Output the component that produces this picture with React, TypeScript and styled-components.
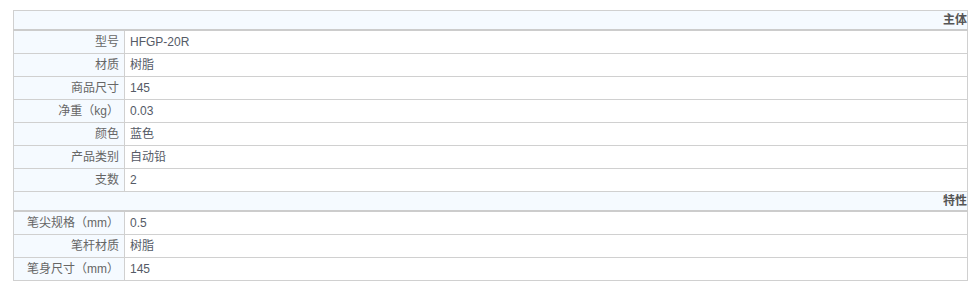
import React from "react";
import styled, { createGlobalStyle } from "styled-components";

const GlobalStyle = createGlobalStyle`
  body {
    margin: 0;
    background: #ffffff;
    font-family: "Liberation Sans", Arial, "Noto Sans CJK SC", sans-serif;
  }
`;

const Wrapper = styled.div`
  padding: 10px 0 0 13px;
`;

const SpecTable = styled.table`
  width: 955px;
  border-collapse: collapse;
  table-layout: fixed;
  font-size: 12px;
  color: #666666;
`;

const SectionHead = styled.th`
  height: 18px;
  padding: 0;
  text-align: right;
  font-weight: bold;
  font-size: 12px;
  line-height: 18px;
  color: #555555;
  background: #f5faff;
  border: 1px solid #d0d0d0;
  border-bottom: 2px solid #cccccc;
`;

const Label = styled.td`
  width: 105px;
  height: 22px;
  padding: 0 5px 0 0;
  text-align: right;
  line-height: 22px;
  background: #f5faff;
  border: 1px solid #d0d0d0;
  white-space: nowrap;
`;

const Value = styled.td`
  height: 22px;
  padding: 0 0 0 5px;
  line-height: 22px;
  color: #555a66;
  background: #ffffff;
  border: 1px solid #d0d0d0;
`;

interface Section {
  title: string;
  rows: Array<[string, string]>;
}

const sections: Section[] = [
  {
    title: "主体",
    rows: [
      ["型号", "HFGP-20R"],
      ["材质", "树脂"],
      ["商品尺寸", "145"],
      ["净重（kg）", "0.03"],
      ["颜色", "蓝色"],
      ["产品类别", "自动铅"],
      ["支数", "2"],
    ],
  },
  {
    title: "特性",
    rows: [
      ["笔尖规格（mm）", "0.5"],
      ["笔杆材质", "树脂"],
      ["笔身尺寸（mm）", "145"],
    ],
  },
];

function App() {
  return (
    <Wrapper>
      <GlobalStyle />
      <SpecTable>
        <colgroup>
          <col style={{ width: 111 }} />
          <col />
        </colgroup>
        <tbody>
          {sections.map((section) => (
            <React.Fragment key={section.title}>
              <tr>
                <SectionHead colSpan={2}>{section.title}</SectionHead>
              </tr>
              {section.rows.map(([name, value]) => (
                <tr key={name}>
                  <Label>{name}</Label>
                  <Value>{value}</Value>
                </tr>
              ))}
            </React.Fragment>
          ))}
        </tbody>
      </SpecTable>
    </Wrapper>
  );
}

export default App;
